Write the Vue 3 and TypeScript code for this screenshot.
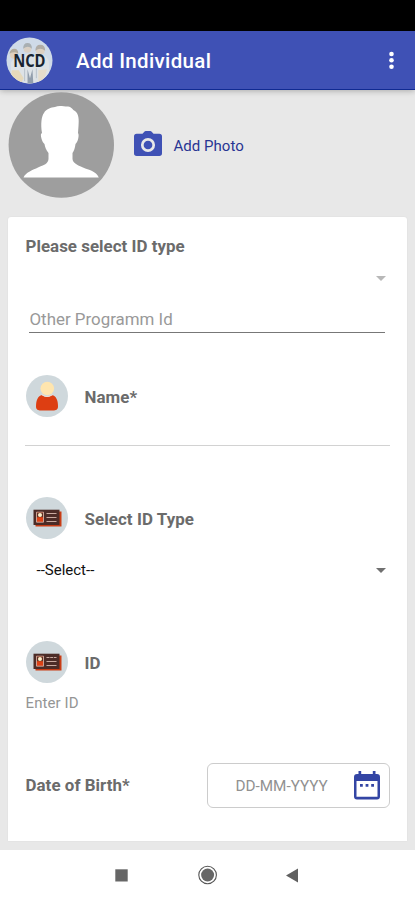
<script setup lang="ts">
import { ref } from 'vue'

const programId = ref<string>('')
const selectedType = ref<string>('--Select--')
const idLines: number[] = [8, 12, 16]
</script>

<template>
  <div class="screen">
    <div class="status"></div>
    <header class="bar">
      <svg class="logo" viewBox="0 0 48 48" role="img" aria-label="NCD">
        <defs>
          <clipPath id="logoClip"><circle cx="24" cy="24" r="23.5" /></clipPath>
        </defs>
        <circle cx="24" cy="24" r="23.5" fill="#cfdae8" />
        <g clip-path="url(#logoClip)">
          <path d="M5 48V26q4-6 9-4l8-5 6 4 6-4q9 1 10 10v21z" fill="#dde2e6" />
          <circle cx="22" cy="12" r="4" fill="#d9cfc4" />
          <path d="M17.500 12q0-6 4.500-6t4.500 6q-4-4-9 0z" fill="#a9afb2" />
          <circle cx="35" cy="14" r="4.500" fill="#dcd0c2" />
          <path d="M30 14q0-6 5-6t5 6q-5-4-10 0z" fill="#b0aca6" />
          <circle cx="8" cy="18" r="4" fill="#decfbd" />
          <path d="M3.500 17q1-5 5-5t4 5q-4-3-9 0z" fill="#b3ab9c" />
          <path d="M6 34h7l5 8-3 6H4z" fill="#e6d9bb" />
          <path d="M22 33l2.500 9 2.500-9 1 16h-6z" fill="#929eac" />
          <path d="M33 34l9-1-4 13-5 1z" fill="#e5dccb" />
          <path d="M19 32v13M31 32v10" stroke="#b8c2cb" fill="none" />
        </g>
        <text x="23.800" y="30.500" text-anchor="middle" textLength="33" lengthAdjust="spacingAndGlyphs" class="logo-text">NCD</text>
      </svg>
      <h1>Add Individual</h1>
      <svg class="more" viewBox="0 0 6 20"><circle cx="2.500" cy="4" r="2.300" /><circle cx="2.500" cy="10.300" r="2.300" /><circle cx="2.500" cy="16.700" r="2.300" /></svg>
    </header>

    <main class="content">
      <section class="photo">
        <svg class="avatar" viewBox="0 0 106 106">
          <circle cx="53.300" cy="53" r="52.700" fill="#9e9e9e" />
          <path fill="#fff" d="M15.500 85.500C18 80 25 78 30 75.500C36 73 40 72 40.500 67V61C38 58 37 55 36.500 52C34 50 32.500 44 33 42L34 41C32.500 32 33.500 24 36 21C38 17 43 15.500 47 15C51 13 55 14.500 60 14.500C64 15 64.500 18 67 19C71 22 71 28 70.500 34L70 41C71.500 43 70 50 67.500 52C67 56 66 59 64.500 61V67C65 71 69 73 75 75.500C81 78 88 79 90.800 85.500Z" />
        </svg>
        <svg class="camera" viewBox="0 0 28 25">
          <path fill="#3f51b5" d="M8.500 2.700 10.300.7Q10.900 0 11.800 0h4.400q.9 0 1.500.7l1.800 2H25.300Q28 2.700 28 5.400v16.900Q28 25 25.300 25H2.700Q0 25 0 22.300V5.400Q0 2.700 2.700 2.700z" />
          <circle cx="14" cy="14" r="5.700" fill="none" stroke="#e8e8e8" stroke-width="2.700" />
        </svg>
        <span class="add">Add Photo</span>
      </section>

      <section class="card">
        <h2 class="label title">Please select ID type</h2>
        <div class="picker muted"><i class="caret"></i></div>
        <input v-model="programId" class="program" placeholder="Other Programm Id" />

        <div class="heading name">
          <svg class="badge" viewBox="0 0 42 42">
            <circle cx="21" cy="21" r="21" fill="#cfd8dc" />
            <path fill="#dd3e12" d="M10 31.500c0-6.500 2-10.500 6-11.500 3 2.500 7 2.500 10 0 4 1 6 5 6 11.500 0 3-2 4-5 4H15c-3 0-5-1-5-4z" />
            <circle cx="21.300" cy="13.500" r="6.800" fill="#ffe5ae" />
            <path d="M15.800 19.300q5.300 3.800 10.800 0v1q-5.500 3.500-10.800 0z" fill="#f3e6d8" />
          </svg>
          <span class="label">Name*</span>
        </div>
        <div class="rule"></div>

        <template v-for="heading in ['Select ID Type', 'ID']" :key="heading">
          <div class="heading">
            <svg class="badge" viewBox="0 0 42 42">
              <circle cx="21" cy="21" r="21" fill="#cfd8dc" />
              <path d="M9.500 14.500h26v15h-26z" fill="#c83c14" />
              <path d="M7.500 12.700h26v15.300h-26z" fill="#4c2c27" />
              <path d="M10.500 15.200H17.500v10H10.500z" fill="#dd4216" stroke="#d9bdb1" stroke-width=".8" />
              <path d="M11 15.700h6v4.500h-6z" fill="#5d3022" />
              <circle cx="14" cy="18" r="2" fill="#fff0c9" />
              <path v-for="y in idLines" :key="y" :d="`M20.500 ${y + 8.500}h10`" stroke="#c9aaa0" stroke-width="1" :stroke-dasharray="heading === 'ID' && y === 8 ? '3 .7' : undefined" />
            </svg>
            <span class="label">{{ heading }}</span>
          </div>
          <div v-if="heading !== 'ID'" class="picker select">
            <span>{{ selectedType }}</span><i class="caret"></i>
          </div>
          <div v-else class="enter">Enter ID</div>
        </template>

        <div class="birth">
          <span class="label">Date of Birth*</span>
          <button class="date" type="button">
            <span>DD-MM-YYYY</span>
            <svg class="calendar" viewBox="0 0 26 29">
              <path fill="#3345a4" fill-rule="evenodd" d="M4.500 0h2.700v3h11.600V0h2.700v3H23q3 0 3 3v19.500q0 3-3 3H3q-3 0-3-3V6q0-3 3-3h1.500zM2.500 10v15.700h21V10z" />
              <path fill="#3345a4" d="M6 13h2.800v2.800H6zm5.600 0h2.800v2.800h-2.800zm5.600 0H20v2.800h-2.800z" />
            </svg>
          </button>
        </div>
      </section>
    </main>

    <nav class="system">
      <svg viewBox="0 0 13 13" class="square"><path d="M.3.3h12.400v12.200H.3z" fill="#666" /></svg>
      <svg viewBox="0 0 20 20" class="home"><circle cx="9.600" cy="10" r="8.800" fill="none" stroke="#555" stroke-width="1.100" /><circle cx="9.600" cy="10" r="6.500" fill="#666" /></svg>
      <svg viewBox="0 0 13 15" class="back"><path d="M0 7.500 12 .5v14z" fill="#606060" /></svg>
    </nav>
  </div>
</template>

<style>
body { margin: 0; background: #fff; }
</style>

<style scoped>
* { box-sizing: border-box; }
svg { display: block; flex: none; }
.screen { width: 415px; height: 900px; display: flex; flex-direction: column; overflow: hidden; font-family: Roboto, sans-serif; background: #e8e8e8; }
.status { height: 31px; background: #000; }
.bar { height: 59px; display: flex; align-items: center; padding: 0 20px 0 6px; background: #3f51b5; border-bottom: 1px solid #102a92; box-shadow: 0 1px 6px #0004; }
.logo { width: 47px; height: 47px; }
.logo-text { font: 700 18px "Open Sans", sans-serif; fill: #17232f; }
h1 { margin: 2px 0 0 23px; color: #fff; font-size: 20.500px; line-height: 28px; font-weight: 500; letter-spacing: .35px; }
.more { width: 6px; height: 20px; margin-left: auto; fill: #fff; }
.content { height: 760px; padding: 2px 8px 0; }
.photo { height: 125px; display: flex; align-items: flex-start; }
.avatar { width: 106px; height: 106px; }
.camera { width: 28px; height: 25px; margin: 39px 0 0 20px; }
.add { margin: 44px 0 0 11.400px; font-size: 15px; line-height: 20px; color: #283593; letter-spacing: .05px; }
.card { height: 624px; padding: 14px 17px 0; background: #fff; border-radius: 3px 3px 0 0; box-shadow: 0 0 2px #0001; }
.label { color: #6b6b6b; font-size: 16.900px; line-height: 30px; font-weight: 700; }
.title { margin: 0; padding-left: .5px; letter-spacing: .03px; }
.picker { height: 30px; display: flex; align-items: center; padding: 0 4px 0 11.500px; color: #111; font-size: 15px; }
.muted { margin-top: 2px; }
.caret { margin-left: auto; border: solid transparent; border-width: 5px 5px 0; border-top-color: #707070; }
.muted .caret { border-top-color: #b8b8b8; }
.program { display: block; width: 356px; height: 27px; margin: 13px 0 0 4px; padding: 0 0 0 .5px; border: 0; border-bottom: 1px solid #777; border-radius: 0; outline: 0; background: none; color: #333; font: 16.900px Roboto, sans-serif; }
.program::placeholder { color: #999; opacity: 1; }
.heading { height: 42px; display: flex; align-items: center; gap: 17px; }
.heading .label { padding-top: 1px; letter-spacing: .08px; }
.badge { width: 42px; height: 42px; margin-left: .5px; }
.name { margin-top: 42px; }
.rule { height: 1px; margin: 28px 0 51px; background: #d2d2d2; }
.select { margin: 16px 0 56px; }
.enter { margin-top: 10px; padding-left: .5px; color: #959595; font-size: 15px; line-height: 21px; letter-spacing: .1px; }
.birth { height: 45px; margin-top: 49px; display: flex; align-items: center; justify-content: space-between; }
.birth .label { padding: 0 0 2px .5px; letter-spacing: .05px; }
.date { width: 183px; height: 45px; display: flex; align-items: center; justify-content: space-between; padding: 0 9px 0 27.400px; border: 1px solid #ccc; border-radius: 6px; background: #fff; color: #919191; font: 15.300px Roboto, sans-serif; }
.calendar { width: 26px; height: 29px; }
.system { height: 50px; background: #fff; display: flex; align-items: center; padding-left: 115px; }
.square { width: 13px; height: 13px; }
.home { width: 20px; height: 20px; margin-left: 70px; }
.back { width: 13px; height: 15px; margin-left: 68px; }
</style>
